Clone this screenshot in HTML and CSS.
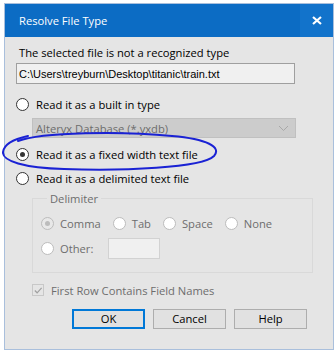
FILE: index.html
```html
<!DOCTYPE html>
<html>
    <head>
        <title>Resolve File Type</title>
        <meta charset="UTF-8">
        <link rel="stylesheet" href="styles.css">
    </head>
    <body>
        <div class="window">
            <div class="titlebar">
                <span class="title">Resolve File Type</span>
                <span class="close">
                    <svg width="10" height="9" viewBox="0 0 10 9">
                        <path d="M1 1 L9 8 M9 1 L1 8" stroke="#fff" stroke-width="2.2" fill="none"/>
                    </svg>
                </span>
            </div>
            <div class="content">
                <p class="intro">The selected file is not a recognized type</p>
                <div class="path">C:\Users\treyburn\Desktop\titanic\train.txt</div>

                <div class="option"><span class="radio"></span>Read it as a built in type</div>
                <div class="select">
                    <span>Alteryx Database (*.yxdb)</span>
                    <svg width="11" height="7" viewBox="0 0 11 7">
                        <path d="M1 1 L5.5 5.5 L10 1" stroke="#a8a8a8" stroke-width="1" fill="none"/>
                    </svg>
                </div>
                <div class="option option-gap"><span class="radio on"></span>Read it as a fixed width text file</div>
                <div class="option option-gap"><span class="radio"></span>Read it as a delimited text file</div>

                <fieldset class="group">
                    <legend>Delimiter</legend>
                    <div class="row">
                        <div class="choice"><span class="radio off on"></span>Comma</div>
                        <div class="choice"><span class="radio off"></span>Tab</div>
                        <div class="choice"><span class="radio off"></span>Space</div>
                        <div class="choice"><span class="radio off"></span>None</div>
                    </div>
                    <div class="row">
                        <div class="choice"><span class="radio off"></span>Other:</div>
                        <div class="other-box"></div>
                    </div>
                </fieldset>

                <div class="check">
                    <span class="box">
                        <svg width="11" height="11" viewBox="0 0 11 11">
                            <path d="M2 5.5 L4.5 8 L9.5 2.5" stroke="#a0a0a0" stroke-width="1.3" fill="none"/>
                        </svg>
                    </span>
                    First Row Contains Field Names
                </div>

                <div class="buttons">
                    <div class="btn default">OK</div>
                    <div class="btn">Cancel</div>
                    <div class="btn">Help</div>
                </div>
            </div>
            <!-- blue hand drawn circle around the chosen option -->
            <svg class="scribble" width="225" height="45" viewBox="0 0 225 45">
                <path d="M16 10 C 40 1, 120 0, 170 5 C 205 8, 220 16, 212 25 C 200 37, 120 40, 62 38 C 22 37, 0 30, 1 21 C 2 13, 12 8, 26 5"
                      stroke="#1a22d4" stroke-width="2" fill="none" stroke-linecap="round"/>
            </svg>
        </div>
    </body>
</html>
```

FILE: styles.css
```css
* {
    margin: 0;
    padding: 0;
    box-sizing: border-box;
}

body {
    background: #ffffff;
    font-family: "Open Sans", "Noto Sans", sans-serif;
    font-size: 11.2px;
    color: #000;
}

.window {
    position: relative;
    width: 330px;
    height: 347px;
    margin: 3px 0 0 4px;
    border: 1px solid #a9bfdc;
    background: #e5e5e5;
}

.titlebar {
    height: 33px;
    display: flex;
    align-items: center;
    justify-content: space-between;
    background: #0c6cc4;
    color: #fff;
}

.title {
    padding-left: 14px;
}

.close {
    width: 33px;
    height: 33px;
    display: flex;
    align-items: center;
    justify-content: center;
    background: #1273cb;
}

.content {
    padding: 8px 0 0 11px;
}

.intro {
    line-height: 16px;
    padding-left: 3px;
}

.path {
    width: 279px;
    height: 21px;
    margin-top: 2px;
    padding: 2px 0 0 2px;
    border: 1px solid #9f9f9f;
    background: #f0f0f0;
    font-family: "Liberation Sans", Arial, sans-serif;
    font-size: 11px;
    line-height: 16px;
}

.option {
    display: flex;
    align-items: center;
    height: 16px;
    margin-top: 12px;
}

.option-gap {
    margin-top: 8px;
}

.radio {
    position: relative;
    width: 13px;
    height: 13px;
    margin-right: 7px;
    border: 1px solid #333;
    border-radius: 50%;
    background: #fff;
    flex-shrink: 0;
}

.radio.on::after {
    content: "";
    position: absolute;
    left: 3px;
    top: 3px;
    width: 5px;
    height: 5px;
    border-radius: 50%;
    background: #333;
}

.radio.off {
    border-color: #bcbcbc;
    background: #fff;
}

.radio.off.on {
    background: #e8e8e8;
}

.radio.off.on::after {
    background: #bcbcbc;
}

.select {
    display: flex;
    align-items: center;
    justify-content: space-between;
    width: 264px;
    height: 20px;
    margin: 6px 0 0 16px;
    padding: 0 6px 0 3px;
    border: 1px solid #c0c0c0;
    background: #cccccc;
    color: #6d6d6d;
}

.group {
    width: 281px;
    height: 82px;
    margin: 5px 0 0 16px;
    padding: 6px 0 0 8px;
    border: 1px solid #d9d9d9;
    color: #6d6d6d;
}

.group legend {
    padding: 0 3px;
    margin-left: 6px;
}

.row {
    display: flex;
    align-items: center;
    height: 22px;
    gap: 12px;
}

.row + .row {
    margin-top: 3px;
}

.choice {
    display: flex;
    align-items: center;
}

.choice .radio {
    margin-right: 6px;
}

.other-box {
    width: 52px;
    height: 21px;
    margin-left: 3px;
    border: 1px solid #d2d2d2;
    background: #f0f0f0;
}

.check {
    display: flex;
    align-items: center;
    height: 16px;
    margin: 9px 0 0 16px;
    color: #6d6d6d;
}

.check .box {
    display: flex;
    align-items: center;
    justify-content: center;
    width: 12px;
    height: 12px;
    margin-right: 7px;
    border: 1px solid #c8c8c8;
}

.buttons {
    display: flex;
    gap: 8px;
    margin: 11px 0 0 56px;
}

.btn {
    width: 73px;
    height: 20px;
    border: 1px solid #adadad;
    background: #e1e1e1;
    text-align: center;
    line-height: 17px;
}

.btn.default {
    border: 2px solid #0078d7;
    line-height: 16px;
}

.scribble {
    position: absolute;
    left: -3px;
    top: 127px;
}
```
